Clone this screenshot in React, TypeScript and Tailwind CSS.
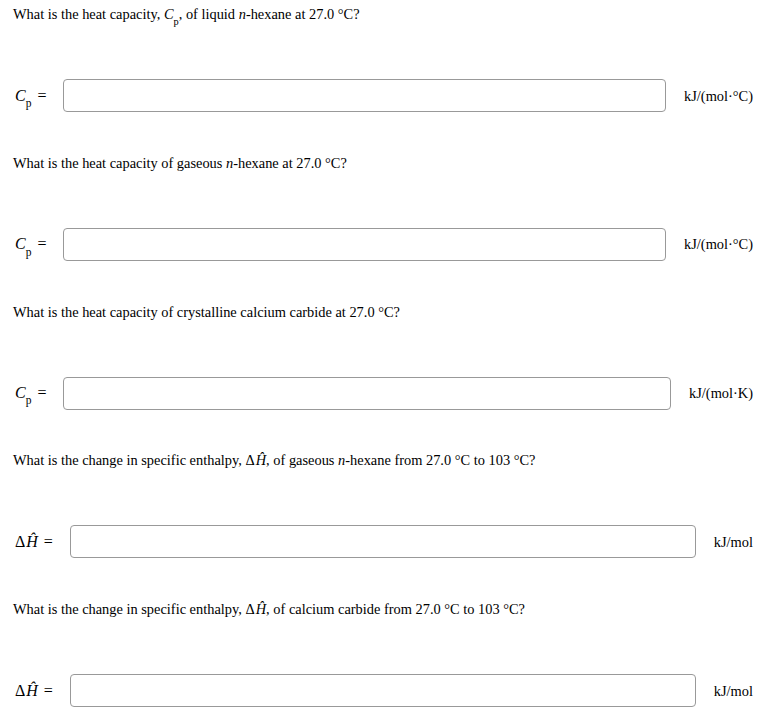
import React from 'react';

type Row = {
  question: React.ReactNode;
  label: React.ReactNode;
  unit: string;
};

const Cp = () => (
  <span>
    <i>C</i>
    <sub className="text-[0.72em] align-[-0.3em]">p</sub>
  </span>
);

const DeltaH = () => (
  <span>
    Δ<i className="ml-[1px]">Ĥ</i>
  </span>
);

const rows: Row[] = [
  {
    question: (
      <>
        What is the heat capacity, <Cp />, of liquid <i>n</i>-hexane at 27.0 °C?
      </>
    ),
    label: <Cp />,
    unit: 'kJ/(mol·°C)',
  },
  {
    question: (
      <>
        What is the heat capacity of gaseous <i>n</i>-hexane at 27.0 °C?
      </>
    ),
    label: <Cp />,
    unit: 'kJ/(mol·°C)',
  },
  {
    question: <>What is the heat capacity of crystalline calcium carbide at 27.0 °C?</>,
    label: <Cp />,
    unit: 'kJ/(mol·K)',
  },
  {
    question: (
      <>
        What is the change in specific enthalpy, <DeltaH />, of gaseous <i>n</i>-hexane from 27.0 °C to 103 °C?
      </>
    ),
    label: <DeltaH />,
    unit: 'kJ/mol',
  },
  {
    question: (
      <>
        What is the change in specific enthalpy, <DeltaH />, of calcium carbide from 27.0 °C to 103 °C?
      </>
    ),
    label: <DeltaH />,
    unit: 'kJ/mol',
  },
];

export default function App() {
  return (
    <div
      className="bg-white text-black text-[14.4px] leading-4 px-[13px] pt-[6px]"
      style={{ fontFamily: '"Liberation Serif", "Times New Roman", serif' }}
    >
      {rows.map((row, i) => (
        <div key={i} className="mb-[42.75px]">
          <p>{row.question}</p>
          <div className="mt-[57px] flex items-center">
            <div className="pl-[2px] pr-[17px] text-[16px] whitespace-nowrap">
              {row.label} <span className="ml-[2px]">=</span>
            </div>
            <input
              type="text"
              className="flex-1 h-[33px] border border-[#999] rounded-[4px] bg-white outline-none"
            />
            <div className="pl-[18px] pr-[2px] whitespace-nowrap">{row.unit}</div>
          </div>
        </div>
      ))}
    </div>
  );
}
